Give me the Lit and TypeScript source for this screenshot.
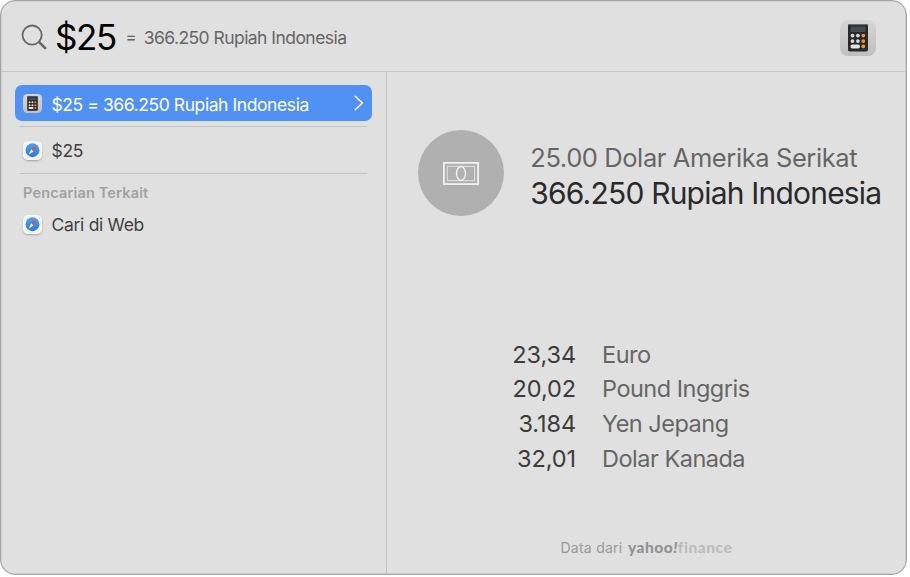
import { LitElement, html, css, svg } from "lit";
import { customElement, property } from "lit/decorators.js";

@customElement("calculator-icon")
class CalculatorIcon extends LitElement {
  static styles = css`
    :host { display: block; }
    svg { display: block; width: 100%; height: 100%; overflow: visible; }
  `;
  render() {
    const keys = [
      [12.5, 15.6, "#d9d9d9"], [17.9, 15.6, "#d9d9d9"], [23.3, 15.6, "#f59220"],
      [12.5, 21.1, "#d9d9d9"], [17.9, 21.1, "#d9d9d9"], [23.3, 21.1, "#f59220"],
      [23.3, 26.4, "#f59220"],
    ];
    return html`<svg viewBox="0 0 36 36">
      <defs>
        <linearGradient id="plate" x1="0" y1="0" x2="0" y2="1">
          <stop offset="0" stop-color="#d6d6d6" /><stop offset="1" stop-color="#bfbfbf" />
        </linearGradient>
      </defs>
      <rect x="0" y="0" width="36" height="36" rx="8" fill="url(#plate)" />
      <rect x="8" y="4" width="20" height="27.5" rx="1.8" fill="#27292b" />
      <rect x="8.6" y="4" width="18.8" height="1.2" fill="#4f7488" />
      <rect x="10.6" y="6.8" width="14.8" height="5.2" rx=".6" fill="#48494b" />
      ${keys.map(([x, y, f]) => svg`<circle cx=${x} cy=${y} r="1.9" fill=${f} />`)}
      <rect x="10.5" y="24.4" width="9.4" height="4" rx="1.6" fill="#e2e2e2" />
    </svg>`;
  }
}

@customElement("safari-icon")
class SafariIcon extends LitElement {
  static styles = css`
    :host { display: block; border-radius: 5px; box-shadow: 0 1px 2px rgba(0, 0, 0, 0.28); }
    svg { display: block; width: 100%; height: 100%; }
  `;
  render() {
    return html`<svg viewBox="0 0 20 20">
      <defs>
        <linearGradient id="sea" x1="0" y1="0" x2="0" y2="1">
          <stop offset="0" stop-color="#4ba6ee" /><stop offset="1" stop-color="#2d78d8" />
        </linearGradient>
      </defs>
      <rect width="20" height="20" rx="5" fill="#f5f5f5" />
      <circle cx="10" cy="9.7" r="7.3" fill="url(#sea)" />
      <path d="M14.2 5 8.7 8.7 11 11Z" fill="#e9483f" />
      <path d="M5.8 14.4 8.7 8.7 11 11Z" fill="#f2f2f2" />
    </svg>`;
  }
}

@customElement("result-row")
class ResultRow extends LitElement {
  @property() icon = "safari";
  @property() label = "";
  @property({ type: Boolean, reflect: true }) selected = false;

  static styles = css`
    :host {
      display: flex; align-items: center; height: 36px; box-sizing: border-box;
      padding: 0 8px 0 8.5px; border-radius: 7px; color: #414141;
    }
    :host([selected]) { background: #5291f4; color: #fff; }
    .icon { width: 19px; height: 19px; flex: none; margin-right: 9.5px; }
    .label { flex: 1; font-size: 17.5px; letter-spacing: -0.3px; white-space: nowrap; }
    :host([selected]) .label { letter-spacing: -0.42px; padding-top: 2px; }
    .chevron { width: 10px; height: 16px; }
  `;
  render() {
    return html`
      ${this.icon === "calculator"
        ? html`<calculator-icon class="icon"></calculator-icon>`
        : html`<safari-icon class="icon"></safari-icon>`}
      <span class="label">${this.label}</span>
      ${this.selected
        ? html`<svg class="chevron" viewBox="0 0 10 16">
            <path d="M1.2 1.2 8.4 8 1.2 14.8" fill="none" stroke="#fff" stroke-width="1.5" stroke-linecap="round" stroke-linejoin="round" />
          </svg>`
        : ""}
    `;
  }
}

const rates = [
  ["23,34", "Euro"],
  ["20,02", "Pound Inggris"],
  ["3.184", "Yen Jepang"],
  ["32,01", "Dolar Kanada"],
];

@customElement("app-root")
class AppRoot extends LitElement {
  static styles = css`
    :host {
      display: block; width: 910px; height: 577px; background: #fff; overflow: hidden;
      font-family: Inter, "Liberation Sans", sans-serif;
    }
    .window {
      width: 907px; height: 575px; box-sizing: border-box; display: flex; flex-direction: column;
      background: #e0e0e0; border: 1px solid #a4a4a4; border-radius: 15px; overflow: hidden;
      box-shadow: inset 0 0 0 0.5px #c0c0c0;
    }
    .search {
      flex: none; height: 70.5px; box-sizing: border-box; border-bottom: 1px solid #c6c6c6;
      display: flex; align-items: center; padding: 0 30px 0 19.5px;
    }
    .glass { width: 28px; height: 28px; margin: 5px 6.5px 0 0; }
    .query { font-size: 35px; color: #000; letter-spacing: -1.4px; line-height: 68px; padding-top: 2px; }
    .equals { font-size: 17px; color: #666; margin-left: 9.5px; padding-top: 3px; }
    .answer { font-size: 17.5px; color: #666; letter-spacing: -0.55px; margin-left: 7px; padding-top: 3px; flex: 1; }
    .app { width: 36px; height: 36px; margin-top: 4px; }
    .body { flex: 1; display: flex; min-height: 0; }
    .list {
      width: 386px; box-sizing: border-box; border-right: 1px solid #c3c3c3;
      padding: 13.5px 14px 0 13.5px;
    }
    .rule { height: 1px; background: #c4c4c4; margin: 5px; }
    .heading {
      font-size: 14.5px; font-weight: 600; color: #a2a2a2; line-height: 18px; margin: 10px 0 4px 8.5px;
      letter-spacing: 0.16px;
    }
    .preview { flex: 1; display: flex; flex-direction: column; min-width: 0; }
    .hero { display: flex; align-items: center; padding: 58.5px 0 0 31px; }
    .disc {
      width: 86px; height: 86px; border-radius: 50%; background: #b0b0b0; flex: none;
      display: flex; align-items: center; justify-content: center;
    }
    .note { width: 36px; height: 23px; }
    .texts { margin-left: 26.3px; white-space: nowrap; padding-top: 5px; }
    .from { font-size: 25.5px; color: #666; line-height: 34px; letter-spacing: -0.41px; }
    .to { font-size: 30px; color: #2a2a2a; line-height: 36px; letter-spacing: -0.8px; }
    .rates {
      display: grid; grid-template-columns: 189px 1fr; column-gap: 26px; grid-auto-rows: 34.7px;
      margin-top: 121.8px; font-size: 23.5px; line-height: 34.7px;
    }
    .value { text-align: right; color: #3c3c3c; letter-spacing: -0.1px; }
    .name { color: #666; letter-spacing: -0.5px; }
    .credit {
      display: flex; align-items: baseline; margin: auto 0 17px 173.5px; line-height: 18px;
      font-size: 14px; letter-spacing: 0.25px; color: #999;
    }
    .brand {
      font-family: Lato, sans-serif; font-weight: 900; font-size: 15.5px; letter-spacing: 0.5px;
      margin-left: 5.5px; color: #929292;
    }
    .bang { font-style: italic; }
    .brand .sub { color: #bdbdbd; }
  `;

  render() {
    return html`<div class="window">
      <header class="search">
        <svg class="glass" viewBox="0 0 28 28" fill="none" stroke="#666">
          <circle cx="11.1" cy="11.1" r="9.6" stroke-width="1.8" />
          <path d="M18.2 18.2 24.2 24.2" stroke-width="2.6" stroke-linecap="round" />
        </svg>
        <span class="query">$25</span>
        <span class="equals">=</span>
        <span class="answer">366.250 Rupiah Indonesia</span>
        <calculator-icon class="app"></calculator-icon>
      </header>
      <div class="body">
        <nav class="list">
          <result-row icon="calculator" label="$25 = 366.250 Rupiah Indonesia" selected></result-row>
          <div class="rule"></div>
          <result-row label="$25"></result-row>
          <div class="rule"></div>
          <div class="heading">Pencarian Terkait</div>
          <result-row label="Cari di Web"></result-row>
        </nav>
        <main class="preview">
          <section class="hero">
            <div class="disc">
              <svg class="note" viewBox="0 0 36 23" fill="none" stroke="#f0f0f0">
                <rect x=".9" y=".9" width="34.2" height="21.2" stroke-width="1.8" />
                <rect x="4.4" y="4.4" width="27.2" height="14.2" stroke-width="1.1" stroke="#dedede" />
                <ellipse cx="18" cy="11.5" rx="4.5" ry="7" stroke-width="1.4" />
              </svg>
            </div>
            <div class="texts">
              <div class="from">25.00 Dolar Amerika Serikat</div>
              <div class="to">366.250 Rupiah Indonesia</div>
            </div>
          </section>
          <section class="rates">
            ${rates.map(([v, n]) => html`<span class="value">${v}</span><span class="name">${n}</span>`)}
          </section>
          <footer class="credit">
            <span>Data dari</span>
            <span class="brand">yahoo<span class="bang">!</span><span class="sub">finance</span></span>
          </footer>
        </main>
      </div>
    </div>`;
  }
}
